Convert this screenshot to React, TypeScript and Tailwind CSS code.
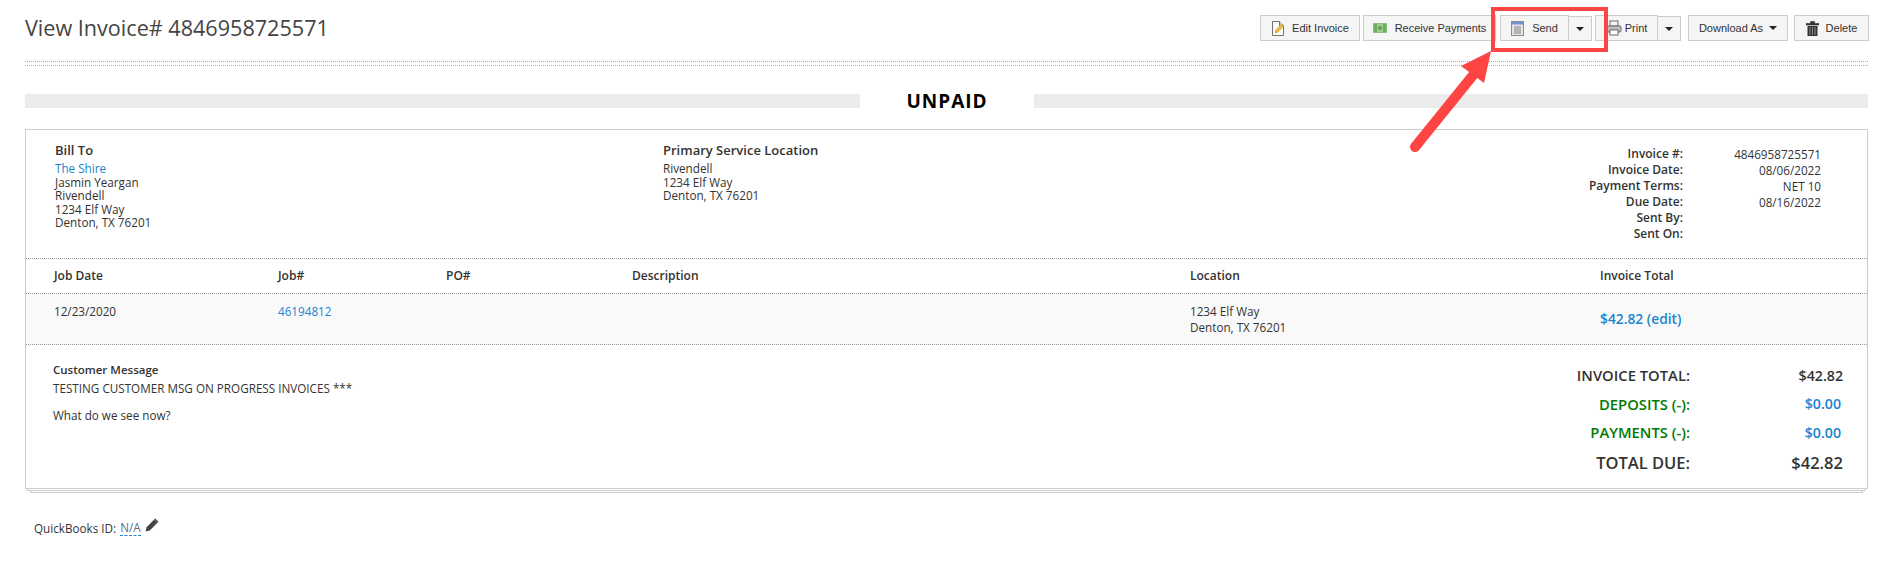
const openSans = "font-['Open_Sans',sans-serif]";

function EditIcon() {
    return (
        <svg width="14" height="17" viewBox="0 0 14 17" className="shrink-0">
            <path d="M1.500 1.500h7l4 4v10h-11z" fill="#fdfdf8" stroke="#77736a" />
            <path d="M8.500 1.500v4h4" fill="#e8e6dc" stroke="#77736a" />
            <path d="M4 13l1-3 5.500-6 2 2-5.500 6z" fill="#f0bd45" stroke="#c9922c" strokeWidth="0.7" />
        </svg>
    );
}

function MoneyIcon() {
    return (
        <svg width="14" height="10" viewBox="0 0 14 10" className="shrink-0">
            <rect width="14" height="10" fill="#86c07a" />
            <rect x="1" y="1" width="12" height="8" fill="#6eae62" />
            <rect x="4" y="1" width="6" height="8" fill="#9bd08e" />
            <circle cx="7" cy="5" r="2" fill="#5c9c52" />
        </svg>
    );
}

function SendIcon() {
    return (
        <svg width="13" height="15" viewBox="0 0 13 15" className="shrink-0">
            <rect x="0.500" y="0.500" width="12" height="14" fill="#e4e4e4" stroke="#8c8c8c" />
            <rect x="1" y="1" width="11" height="2.500" fill="#6f94d6" />
            <rect x="3" y="5" width="7" height="8" fill="#b4b4b4" />
        </svg>
    );
}

function PrintIcon() {
    return (
        <svg width="16" height="16" viewBox="0 0 16 16" className="shrink-0">
            <rect x="4" y="1" width="8" height="5" fill="#f4f4f4" stroke="#6b6b6b" />
            <rect x="1" y="6" width="14" height="6" rx="1" fill="#bdbdbd" stroke="#6b6b6b" />
            <rect x="4" y="10" width="8" height="5" fill="#ffffff" stroke="#6b6b6b" />
        </svg>
    );
}

function TrashIcon() {
    return (
        <svg width="13" height="15" viewBox="0 0 13 15" className="shrink-0">
            <path d="M0 2.500h13v1.500H0zM4.500 2.500V.5h4v2" fill="#333" stroke="#333" strokeWidth="0.6" />
            <path d="M1.500 5h10v10h-10z" fill="#333" />
            <path d="M4 6v8M6.500 6v8M9 6v8" stroke="#8a8a8a" />
        </svg>
    );
}

function Caret() {
    return <span className="inline-block border-x-[4px] border-t-[4px] border-x-transparent border-t-[#222]" />;
}

const btn = "flex items-center justify-center bg-[#f5f5f5] border border-[#ccc] text-[11px] text-[#333] whitespace-nowrap";

function Toolbar() {
    return (
        <div className="flex items-start -mr-px font-['Liberation_Sans',sans-serif]">
            <button className={`${btn} w-[100px] h-[26px] gap-[7px]`}><EditIcon />Edit Invoice</button>
            <button className={`${btn} w-[133px] h-[26px] gap-[8px] ml-[3px]`}><MoneyIcon />Receive Payments</button>
            <div className="flex ml-[4px]">
                <button className={`${btn} w-[69px] h-[26px] gap-[8px]`}><SendIcon />Send</button>
                <button className={`${btn} w-[24px] h-[25px] mt-[1px] -ml-px`}><Caret /></button>
            </div>
            <div className="flex ml-[3px]">
                <button className={`${btn} w-[63px] h-[26px] gap-[3px]`}><PrintIcon />Print</button>
                <button className={`${btn} w-[24px] h-[25px] mt-[1px] -ml-px`}><Caret /></button>
            </div>
            <button className={`${btn} w-[100px] h-[26px] gap-[6px] ml-[7px]`}>Download As<Caret /></button>
            <button className={`${btn} w-[75px] h-[26px] gap-[7px] ml-[6px]`}><TrashIcon />Delete</button>
        </div>
    );
}

function Annotation() {
    return (
        <>
            <div className="absolute left-[1491px] top-[7px] w-[117px] h-[45px] border-[4px] border-[#ff4444]" />
            <svg className="absolute left-[1400px] top-[50px]" width="100" height="105" viewBox="0 0 100 105">
                <path d="M15 97L74 24" stroke="#ff4444" strokeWidth="10" strokeLinecap="round" fill="none" />
                <path d="M91 1L61 16L84 33Z" fill="#ff4444" />
            </svg>
        </>
    );
}

function MetaRow({ label, value }: { label: string; value?: string }) {
    return (
        <div className="flex h-[16px] items-center text-[12px] leading-[16px]">
            <span className="w-[131px] text-right font-semibold">{label}</span>
            <span className="w-[138px] text-right text-[11.700px]">{value}</span>
        </div>
    );
}

function TotalRow({ label, value, labelColor, valueColor, size, valueSize, h, pr }: { label: string; value: string; labelColor: string; valueColor: string; size: string; valueSize: string; h: string; pr: string }) {
    return (
        <div className={`flex items-center font-semibold ${h}`}>
            <span className={`flex-1 text-right ${size} ${labelColor}`}>{label}</span>
            <span className={`w-[153px] text-right ${valueSize} ${valueColor} ${pr}`}>{value}</span>
        </div>
    );
}

export default function App() {
    return (
        <div className={`relative h-[574px] bg-white pl-[25px] pr-[18px] text-[#333] ${openSans}`}>
            <div className="flex justify-between pt-[15px] h-[61px]">
                <h1 className="text-[21.600px] leading-[26px] text-[#444]">View Invoice# 4846958725571</h1>
                <Toolbar />
            </div>
            <div className="h-[5px] border-y border-dotted border-[#aaa]" />

            <div className="flex items-center h-[14px] mt-[28px]">
                <div className="flex-1 h-full bg-[#ececec]" />
                <div className="w-[174px] text-center text-[19px] leading-[14px] font-bold tracking-[1px] text-black">UNPAID</div>
                <div className="w-[834px] h-full bg-[#ececec]" />
            </div>

            <div className="mt-[21px] border border-[#ccc]">
                <div className="flex h-[129px] border-b border-dotted border-[#999]">
                    <div className="w-[608px] pl-[29px] pt-[12px] text-[11.700px] leading-[13.500px]">
                        <p className="text-[13px] leading-[16px] font-semibold mb-[4px]">Bill To</p>
                        <p className="text-[#1a85d0]">The Shire</p>
                        <p>Jasmin Yeargan</p>
                        <p>Rivendell</p>
                        <p>1234 Elf Way</p>
                        <p>Denton, TX 76201</p>
                    </div>
                    <div className="flex-1 pl-[29px] pt-[12px] text-[11.700px] leading-[13.500px]">
                        <p className="text-[13px] leading-[16px] font-semibold mb-[4px]">Primary Service Location</p>
                        <p>Rivendell</p>
                        <p>1234 Elf Way</p>
                        <p>Denton, TX 76201</p>
                    </div>
                    <div className="pt-[16px] pr-[46px]">
                        <MetaRow label="Invoice #:" value="4846958725571" />
                        <MetaRow label="Invoice Date:" value="08/06/2022" />
                        <MetaRow label="Payment Terms:" value="NET 10" />
                        <MetaRow label="Due Date:" value="08/16/2022" />
                        <MetaRow label="Sent By:" />
                        <MetaRow label="Sent On:" />
                    </div>
                </div>

                <div className="grid grid-cols-[224px_168px_186px_558px_1fr] h-[35px] pl-[28px] items-center border-b border-dotted border-[#999] text-[12px] font-semibold">
                    <span>Job Date</span>
                    <span>Job#</span>
                    <span>PO#</span>
                    <span>Description</span>
                    <span className="col-start-5 grid grid-cols-[410px_1fr]">
                        <span>Location</span>
                        <span>Invoice Total</span>
                    </span>
                </div>

                <div className="grid grid-cols-[224px_168px_186px_558px_410px_1fr] h-[51px] pl-[28px] border-b border-dotted border-[#999] bg-[#f9f9f9] text-[11.700px] leading-[16px]">
                    <span className="pt-[9px]">12/23/2020</span>
                    <span className="pt-[9px] text-[#1a85d0]">46194812</span>
                    <span />
                    <span />
                    <span className="pt-[9px]">1234 Elf Way<br />Denton, TX 76201</span>
                    <span className="pt-[17px] text-[13.800px] font-semibold text-[#1a85d0]">$42.82 (edit)</span>
                </div>

                <div className="flex h-[143px]">
                    <div className="flex-1 pl-[27px] pt-[17px] text-[11.700px] leading-[16px]">
                        <p className="text-[11.500px] font-semibold mb-[2px]">Customer Message</p>
                        <p>TESTING CUSTOMER MSG ON PROGRESS INVOICES ***</p>
                        <p className="mt-[11px]">What do we see now?</p>
                    </div>
                    <div className="w-[540px] pt-[16px] pr-[24px]">
                        <TotalRow label="INVOICE TOTAL:" value="$42.82" labelColor="text-[#333]" valueColor="text-[#333]" size="text-[14.800px]" valueSize="text-[14.200px]" h="h-[28.500px]" pr="" />
                        <TotalRow label="DEPOSITS (-):" value="$0.00" labelColor="text-[#007a00]" valueColor="text-[#1a85d0]" size="text-[14.800px]" valueSize="text-[14.200px]" h="h-[28.500px]" pr="pr-[2px]" />
                        <TotalRow label="PAYMENTS (-):" value="$0.00" labelColor="text-[#007a00]" valueColor="text-[#1a85d0]" size="text-[14.800px]" valueSize="text-[14.200px]" h="h-[28.500px]" pr="pr-[2px]" />
                        <TotalRow label="TOTAL DUE:" value="$42.82" labelColor="text-[#333]" valueColor="text-[#333]" size="text-[16.500px]" valueSize="text-[16.500px]" h="h-[33px]" pr="" />
                    </div>
                </div>
            </div>
            <div className="h-[2px] mx-[2px] border-x border-b border-[#ccc]" />
            <div className="h-[2px] mx-[5px] border-x border-b border-[#ccc]" />

            <div className="flex items-center gap-[4px] mt-[26px] pl-[9px] text-[11.700px] leading-[16px]">
                <span>QuickBooks ID:</span>
                <span className="border-b border-dashed border-[#1a85d0] text-[#5b6f8a]">N/A</span>
                <svg width="14" height="14" viewBox="0 0 13 13" className="-mt-[5px]">
                    <path d="M0.500 12.500l1-4 7-7 3 3-7 7z" fill="#444" />
                    <path d="M9.500 0.500l3 3-1 1-3-3z" fill="#444" />
                </svg>
            </div>

            <Annotation />
        </div>
    );
}
